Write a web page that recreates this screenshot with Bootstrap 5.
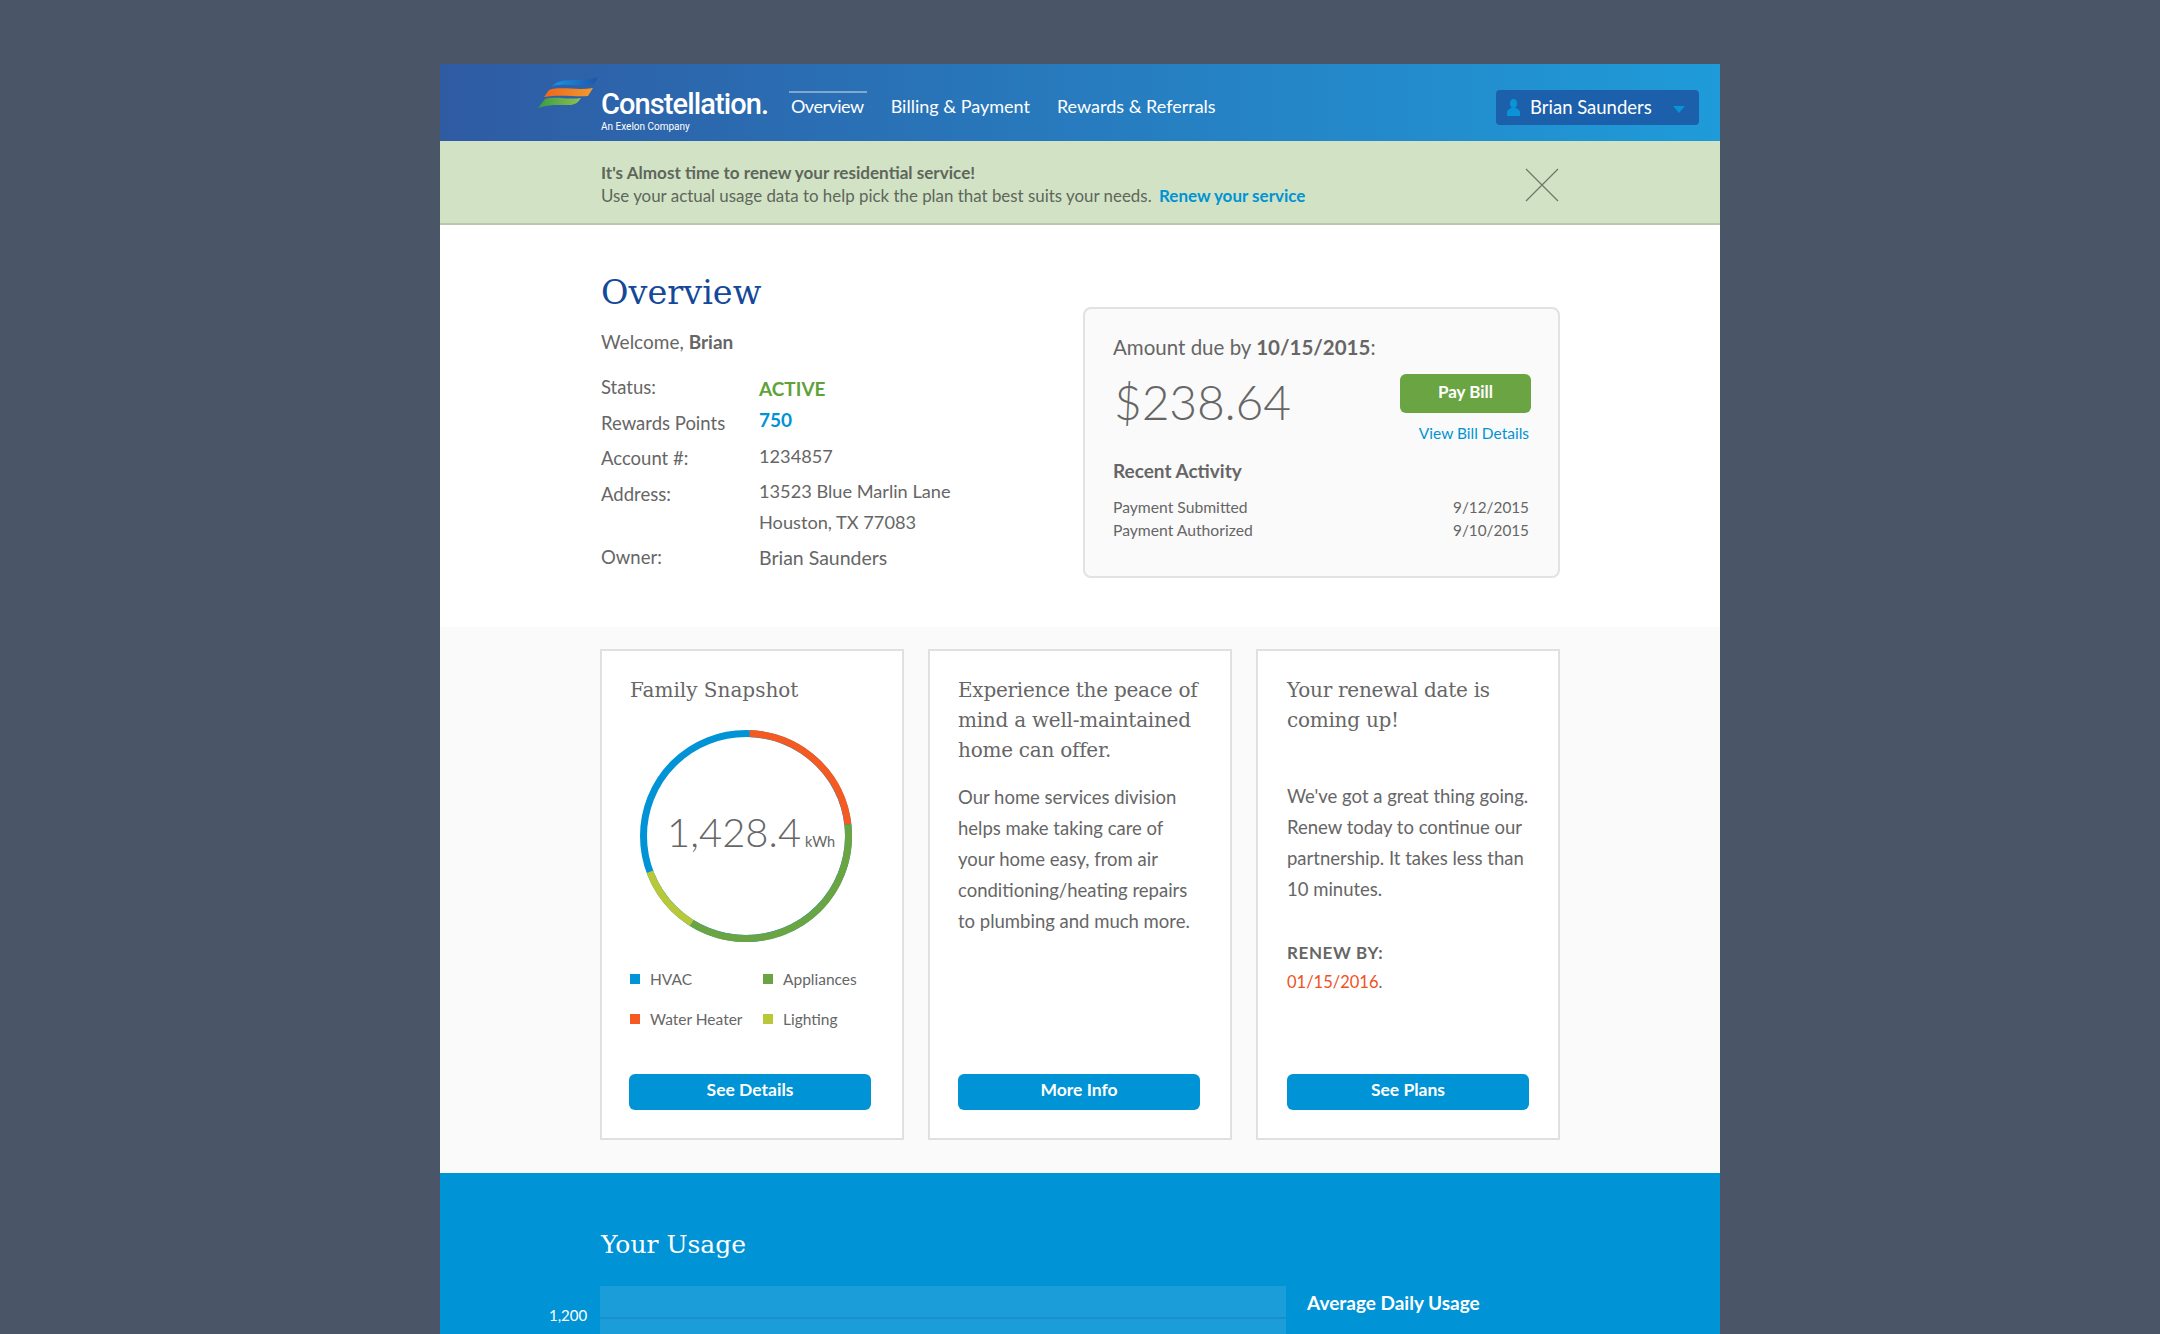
<!DOCTYPE html>
<html lang="en">
<head>
<meta charset="utf-8">
<title>Constellation Overview</title>
<link href="https://cdn.jsdelivr.net/npm/bootstrap@5.3.0/dist/css/bootstrap.min.css" rel="stylesheet">
<style>
html,body{height:1334px;overflow:hidden}
body{background:#4a5568;font-family:Lato,"Liberation Sans",sans-serif;color:#666;font-size:18px;padding-top:64px}
.serif{font-family:"DejaVu Serif","Liberation Serif",serif}
.shell{width:1280px;margin-left:440px}
.topbar{height:77px;padding:0;background:linear-gradient(90deg,#2f5ba3,#1f9bd9);align-items:stretch;flex-wrap:nowrap;justify-content:flex-start}
.brand-box{width:351px;position:relative;flex:none;padding:0;margin:0;display:block;color:#fff}
.brand-flag{position:absolute;left:97px;top:13px}
.brand-name{position:absolute;left:161px;top:21px;font:500 29px/38px Roboto,sans-serif;letter-spacing:-.9px;color:#fff}
.brand-sub{position:absolute;left:161px;top:56px;font:400 10px/14px Roboto,sans-serif;color:#fff}
.topnav{flex-direction:row;gap:27px;margin-left:0}
.topnav .nav-link{color:#fff;padding:4px 0 0;font-size:18px;line-height:77px;height:77px;position:relative}
.topnav .nav-link.active{color:#fff;letter-spacing:-.5px}
.topnav .nav-link.active::before{content:"";position:absolute;left:-2px;right:-3px;top:27px;height:2px;background:rgba(255,255,255,.4)}
.userbtn{margin:26px 21px 0 auto;width:203px;height:35px;background:#1c5faa;border:0;border-radius:4px;color:#fff;font-size:18.5px;display:flex;align-items:center;padding:0 0 0 11px}
.userbtn:hover,.userbtn:active{background:#1c5faa;color:#fff}
.userbtn svg{margin-right:10px}
.caret-mark{width:0;height:0;border:6px solid transparent;border-top:7px solid #0a93d6;border-bottom:0;margin-left:21px;margin-top:3px}
.notice{height:84px;margin:0;padding:0 0 0 161px;border:0;border-bottom:2px solid #b9c6b0;border-radius:0;background:#d1e3c4;color:#5f665c;font-size:16.9px;position:relative;line-height:23px}
.notice-txt{padding-top:20px}
.notice b{font-weight:700;font-size:17.1px}
.notice a{color:#0093d5;font-weight:700;text-decoration:none;margin-left:3px;font-size:17px}
.closer{position:absolute;left:1085px;top:27px;padding:0;border:0;background:none;line-height:0}
.sec-top{background:#fff;height:402px;padding:0 160px 0 161px;display:flex;justify-content:space-between}
.page-title{font-size:33.5px;line-height:40px;color:#14499a;margin:48px 0 0;font-weight:400}
.hello{font-size:19px;line-height:26px;margin:16px 0 0}
.hello b{font-weight:700}
.facts{display:flex;margin-top:14px;font-weight:400}
.fact-l{width:158px;font-size:18.5px}
.fact-l div{height:36px;line-height:36px}
.fact-l div:nth-child(2){height:35px}
.fact-l div:nth-child(4){height:63px}
.fact-v{padding-top:5px;font-size:18.2px}
.fact-v div{height:31px;line-height:30px}
.fact-v div:nth-child(3){height:35px}
.fact-v div:nth-child(2),.fact-v div:nth-child(5){height:36px}
.fact-v div:nth-child(6){font-size:19.5px}
.v-active{color:#5fa23a;font-weight:700;font-size:19px}
.v-points{color:#0093d5;font-weight:700;font-size:19px}
.due{width:477px;height:271px;margin-top:82px;background:#fafafa;border:2px solid #e2e2e2;border-radius:8px;padding:0 29px 0 28px}
.due-h{font-size:20.5px;line-height:28px;margin-top:24px;font-weight:400}
.due-h b{font-weight:700}
.due-m{display:flex;justify-content:space-between;align-items:flex-start}
.amt{font-size:48px;letter-spacing:-.2px;line-height:60px;font-weight:300;margin:11px 0 0 1px}
.pay-col{text-align:right;margin-top:13px;margin-right:-2px}
.paybtn{display:block;width:131px;height:39px;padding:0 0 3px;background:#6ba543;border:0;color:#fff;border-radius:6px;font-size:17px;font-weight:700}
.paybtn:hover,.paybtn:active{background:#6ba543;color:#fff}
.detail-lnk{display:block;color:#0093d5;text-decoration:none;font-size:15.5px;line-height:20px;margin-top:10px;margin-right:2px}
.recent{font-size:19px;font-weight:700;line-height:26px;margin-top:15px}
.act{display:flex;justify-content:space-between;font-size:15.7px;line-height:23px;font-weight:400}
.act span+span{font-size:15.3px}
.act-first{margin-top:12px}
.sec-mid{background:#fafafa;height:546px;padding:22px 160px 0;display:flex;gap:24px;align-items:flex-start}
.tile{width:304px;height:491px;border:2px solid #e0e0e0;border-radius:0;background:#fff;position:relative;padding:0 26px 0 28px;color:#666}
.tile-h{font-size:20px;letter-spacing:-.25px;line-height:30px;font-weight:400;margin:24px 0 0;color:#666}
.tile-p{font-size:18.5px;line-height:31px;font-weight:400;margin:0;max-width:244px}
.gap-a{margin-top:17px}
.gap-b{margin-top:46px}
.act-btn{position:absolute;left:28px;right:30px;top:423px;height:36px;padding:0 0 3px;background:#0093d5;color:#fff;font-size:17.5px;font-weight:700;border:0;border-radius:6px}
.act-btn:hover,.act-btn:active{background:#0093d5;color:#fff}
.left-tile .tile-h{letter-spacing:0}
.left-tile .act-btn{left:27px;right:31px}
.last-tile{padding-left:29px}
.last-tile .act-btn{left:29px;right:29px}
.donut{position:relative;width:212px;height:212px;margin:25px 0 0 10px}
.donut-v{position:absolute;left:27px;top:72px;white-space:nowrap;font-weight:300;font-size:40px;line-height:60px}
.donut-v small{font-size:14.5px;margin-left:4px;font-weight:400}
.legend-grid{display:grid;grid-template-columns:133px auto;row-gap:14px;margin-top:24px;font-size:15.5px;line-height:26px;font-weight:400}
.legend-i{display:flex;align-items:center}
.sw{width:10px;height:10px;margin-right:10px;flex:none}
.renew-l{font-size:17px;font-weight:700;letter-spacing:.6px;line-height:28px;margin-top:34px}
.renew-d{font-size:16.5px;line-height:28px;margin-top:1px;color:#f0511e}
.renew-d span{color:#666}
.sec-usage{background:#0093d5;height:300px;padding:0 160px;color:#fff;position:relative}
.usage-h{font-size:25px;line-height:34px;padding-top:55px;padding-left:1px;font-weight:400;margin:0;height:113px;color:#fff}
.usage-row{display:flex}
.plot{width:686px;height:120px;background:#1a9dd9;position:relative}
.plot::after{content:"";position:absolute;left:0;right:0;top:31px;height:2px;background:#1a8fc8}
.axis-tick{position:absolute;left:109px;top:132px;font-size:15px;line-height:20px}
.avg{margin-left:21px;font-size:19px;font-weight:700;line-height:24px;margin-top:5px}
</style>
</head>
<body>
<div class="shell">
  <nav class="navbar topbar">
    <a class="navbar-brand brand-box" href="#">
      <svg class="brand-flag" width="62" height="32" viewBox="0 0 62 32" aria-hidden="true">
        <defs><linearGradient id="fb" x1="0" x2="1" y1="0" y2="0"><stop offset="0" stop-color="#1a96e6"/><stop offset="1" stop-color="#1f55a8"/></linearGradient>
        <linearGradient id="fo" x1="0" x2="1" y1="0" y2="0"><stop offset="0" stop-color="#f0651c"/><stop offset="1" stop-color="#f29a2e"/></linearGradient>
        <linearGradient id="fg" x1="0" x2="1" y1="0" y2="0"><stop offset="0" stop-color="#3b9a45"/><stop offset="1" stop-color="#8cc152"/></linearGradient></defs>
        <path d="M18 7C27 0 42 6 61 0L57 7C44 10 30 6 15 9Z" fill="url(#fb)"/>
        <path d="M12 13C24 9 40 14 56 11L51 19C38 20 22 17 7 20Z" fill="url(#fo)"/>
        <path d="M8 22C20 19 30 23 44 21C41 26 37 28 33 28C22 28 12 27 1 31Z" fill="url(#fg)"/>
      </svg>
      <span class="brand-name">Constellation.</span>
      <span class="brand-sub">An Exelon Company</span>
    </a>
    <ul class="navbar-nav topnav">
      <li class="nav-item"><a class="nav-link active" href="#">Overview</a></li>
      <li class="nav-item"><a class="nav-link" href="#">Billing &amp; Payment</a></li>
      <li class="nav-item"><a class="nav-link" href="#">Rewards &amp; Referrals</a></li>
    </ul>
    <button type="button" class="btn userbtn">
      <svg width="13" height="17" viewBox="0 0 13 17" aria-hidden="true"><ellipse cx="6.5" cy="4.5" rx="3.6" ry="4.5" fill="#0a93d6"/><path d="M0 17V13.5C0 11 3 9.5 4.5 9H8.5C10 9.5 13 11 13 13.5V17Z" fill="#0a93d6"/></svg>
      <span>Brian Saunders</span><span class="caret-mark"></span>
    </button>
  </nav>
  <div class="alert notice" role="alert">
    <div class="notice-txt"><b>It's Almost time to renew your residential service!</b><br>Use your actual usage data to help pick the plan that best suits your needs. <a href="#">Renew your service</a></div>
    <button type="button" class="closer" aria-label="Close"><svg width="34" height="34" viewBox="0 0 34 34"><path d="M1 1L33 33M33 1L1 33" stroke="#6d7769" stroke-width="1.2" fill="none"/></svg></button>
  </div>
  <section class="sec-top">
    <div>
      <h1 class="page-title serif">Overview</h1>
      <p class="hello">Welcome, <b>Brian</b></p>
      <div class="facts">
        <div class="fact-l"><div>Status:</div><div>Rewards Points</div><div>Account #:</div><div>Address:</div><div>Owner:</div></div>
        <div class="fact-v"><div class="v-active">ACTIVE</div><div class="v-points">750</div><div>1234857</div><div>13523 Blue Marlin Lane</div><div>Houston, TX 77083</div><div>Brian Saunders</div></div>
      </div>
    </div>
    <div class="due">
      <div class="due-h">Amount due by <b>10/15/2015</b>:</div>
      <div class="due-m">
        <div class="amt">$238.64</div>
        <div class="pay-col"><button type="button" class="btn paybtn">Pay Bill</button><a class="detail-lnk" href="#">View Bill Details</a></div>
      </div>
      <div class="recent">Recent Activity</div>
      <div class="act act-first"><span>Payment Submitted</span><span>9/12/2015</span></div>
      <div class="act"><span>Payment Authorized</span><span>9/10/2015</span></div>
    </div>
  </section>
  <section class="sec-mid">
    <div class="card tile left-tile">
      <h2 class="tile-h serif">Family Snapshot</h2>
      <div class="donut">
        <svg width="212" height="212" viewBox="0 0 212 212" aria-hidden="true">
          <g fill="none" stroke-width="7">
            <circle cx="106" cy="106" r="102.5" stroke="#0093d5"/>
            <path d="M109.6 3.56A102.5 102.5 0 0 1 207.9 94.5" stroke="#f45a22"/>
            <path d="M207.9 94.5A102.5 102.5 0 0 1 51.8 193" stroke="#6ba543"/>
            <path d="M51.8 193A102.5 102.5 0 0 1 9.9 141.8" stroke="#b9c838"/>
          </g>
        </svg>
        <div class="donut-v">1,428.4<small>kWh</small></div>
      </div>
      <div class="legend-grid">
        <div class="legend-i"><span class="sw" style="background:#0093d5"></span>HVAC</div>
        <div class="legend-i"><span class="sw" style="background:#6ba543"></span>Appliances</div>
        <div class="legend-i"><span class="sw" style="background:#f45a22"></span>Water Heater</div>
        <div class="legend-i"><span class="sw" style="background:#b9c838"></span>Lighting</div>
      </div>
      <button type="button" class="btn act-btn">See Details</button>
    </div>
    <div class="card tile">
      <h2 class="tile-h serif">Experience the peace of mind a well-maintained home can offer.</h2>
      <p class="tile-p gap-a">Our home services division helps make taking care of your home easy, from air conditioning/heating repairs to plumbing and much more.</p>
      <button type="button" class="btn act-btn">More Info</button>
    </div>
    <div class="card tile last-tile">
      <h2 class="tile-h serif">Your renewal date is coming up!</h2>
      <p class="tile-p gap-b">We've got a great thing going. Renew today to continue our partnership. It takes less than 10 minutes.</p>
      <div class="renew-l">RENEW BY:</div>
      <div class="renew-d">01/15/2016<span>.</span></div>
      <button type="button" class="btn act-btn">See Plans</button>
    </div>
  </section>
  <section class="sec-usage">
    <h2 class="usage-h serif">Your Usage</h2>
    <div class="usage-row">
      <div class="plot"></div>
      <div class="avg">Average Daily Usage</div>
    </div>
    <div class="axis-tick">1,200</div>
  </section>
</div>
<script src="https://cdn.jsdelivr.net/npm/bootstrap@5.3.0/dist/js/bootstrap.bundle.min.js"></script>
</body>
</html>
